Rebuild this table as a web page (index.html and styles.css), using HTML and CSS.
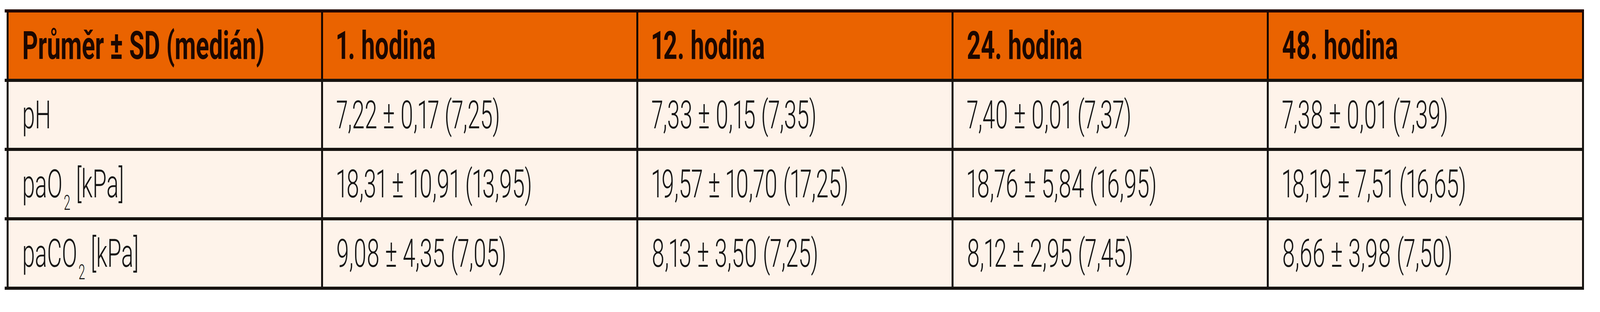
FILE: index.html
```html
<!DOCTYPE html>
<html lang="cs">
<head>
<meta charset="utf-8">
<title>Krevní plyny</title>
<link rel="stylesheet" href="styles.css">
<script src="app.js"></script>
</head>
<body>
<div class="table">
  <div class="row head">
    <div class="cell first"><span class="txt">Průměr ± SD (medián)</span></div>
    <div class="cell"><span class="txt">1. hodina</span></div>
    <div class="cell"><span class="txt">12. hodina</span></div>
    <div class="cell"><span class="txt">24. hodina</span></div>
    <div class="cell"><span class="txt">48. hodina</span></div>
  </div>
  <div class="row r1">
    <div class="cell first"><span class="txt">pH</span></div>
    <div class="cell"><span class="txt">7,22 ± 0,17 (7,25)</span></div>
    <div class="cell"><span class="txt">7,33 ± 0,15 (7,35)</span></div>
    <div class="cell"><span class="txt">7,40 ± 0,01 (7,37)</span></div>
    <div class="cell"><span class="txt">7,38 ± 0,01 (7,39)</span></div>
  </div>
  <div class="row">
    <div class="cell first"><span class="txt">paO<sub class="sub">2</sub> [kPa]</span></div>
    <div class="cell"><span class="txt">18,31 ± 10,91 (13,95)</span></div>
    <div class="cell"><span class="txt">19,57 ± 10,70 (17,25)</span></div>
    <div class="cell"><span class="txt">18,76 ± 5,84 (16,95)</span></div>
    <div class="cell"><span class="txt">18,19 ± 7,51 (16,65)</span></div>
  </div>
  <div class="row">
    <div class="cell first"><span class="txt">paCO<sub class="sub">2</sub> [kPa]</span></div>
    <div class="cell"><span class="txt">9,08 ± 4,35 (7,05)</span></div>
    <div class="cell"><span class="txt">8,13 ± 3,50 (7,25)</span></div>
    <div class="cell"><span class="txt">8,12 ± 2,95 (7,45)</span></div>
    <div class="cell"><span class="txt">8,66 ± 3,98 (7,50)</span></div>
  </div>
</div>
</body>
</html>
```

FILE: styles.css
```css
:root {
  /* horizontal unit: one pixel of the 5689px-wide design, mapped onto the window width */
  --u: calc(100vw / 5689);
  /* vertical unit: one pixel of the 800px-tall design */
  --v: calc(100vh / 800);
  /* ratio window width / design width (set by app.js, fallback for a 4096px window) */
  --kx: 0.72;
}

html, body {
  margin: 0;
  padding: 0;
  background: #ffffff;
  overflow: hidden;
}

.table {
  margin: calc(24 * var(--v)) 0 0 calc(16 * var(--u));
  width: calc(5616 * var(--u));
}

.row {
  display: grid;
  grid-template-columns: calc(1124 * var(--u)) repeat(4, calc(1121 * var(--u)));
  padding-left: calc(8 * var(--u));
  height: calc(170 * var(--v));
  border-bottom: calc(8 * var(--v)) solid #161310;
}

.row.r1 {
  height: calc(169 * var(--v));
}

.row.head {
  border-top: calc(8 * var(--v)) solid #1f0400;
}

.cell {
  box-sizing: border-box;
  display: flex;
  align-items: center;
  padding-left: calc(48 * var(--u));
  background: #fef3ea;
  border-right: calc(8 * var(--u)) solid #161310;
  overflow: hidden;
}

.cell.first {
  border-left: calc(8 * var(--u)) solid #161310;
}

.head .cell {
  background: #ea6300;
  border-color: #170700;
}

.txt {
  display: inline-block;
  font-family: Roboto, "Liberation Sans", sans-serif;
  font-size: calc(101 * var(--v));
  line-height: calc(118 * var(--v));
  font-weight: 300;
  color: #161515;
  white-space: nowrap;
  font-variant-numeric: proportional-nums;
  transform: scaleX(calc(0.80 * var(--kx)));
  transform-origin: 0 50%;
}

.head .txt {
  font-weight: 700;
  color: #1c0700;
  transform: scaleX(calc(0.86 * var(--kx)));
}

.sub {
  font-size: calc(53 * var(--v));
  line-height: 0;
  vertical-align: calc(-32 * var(--v));
  margin-left: 6px;
}
```

FILE: app.js
```js
(function () {
  function setRatio() {
    var k = window.innerWidth / 5689;
    document.documentElement.style.setProperty('--kx', String(k));
  }
  setRatio();
  window.addEventListener('resize', setRatio);
})();
```
